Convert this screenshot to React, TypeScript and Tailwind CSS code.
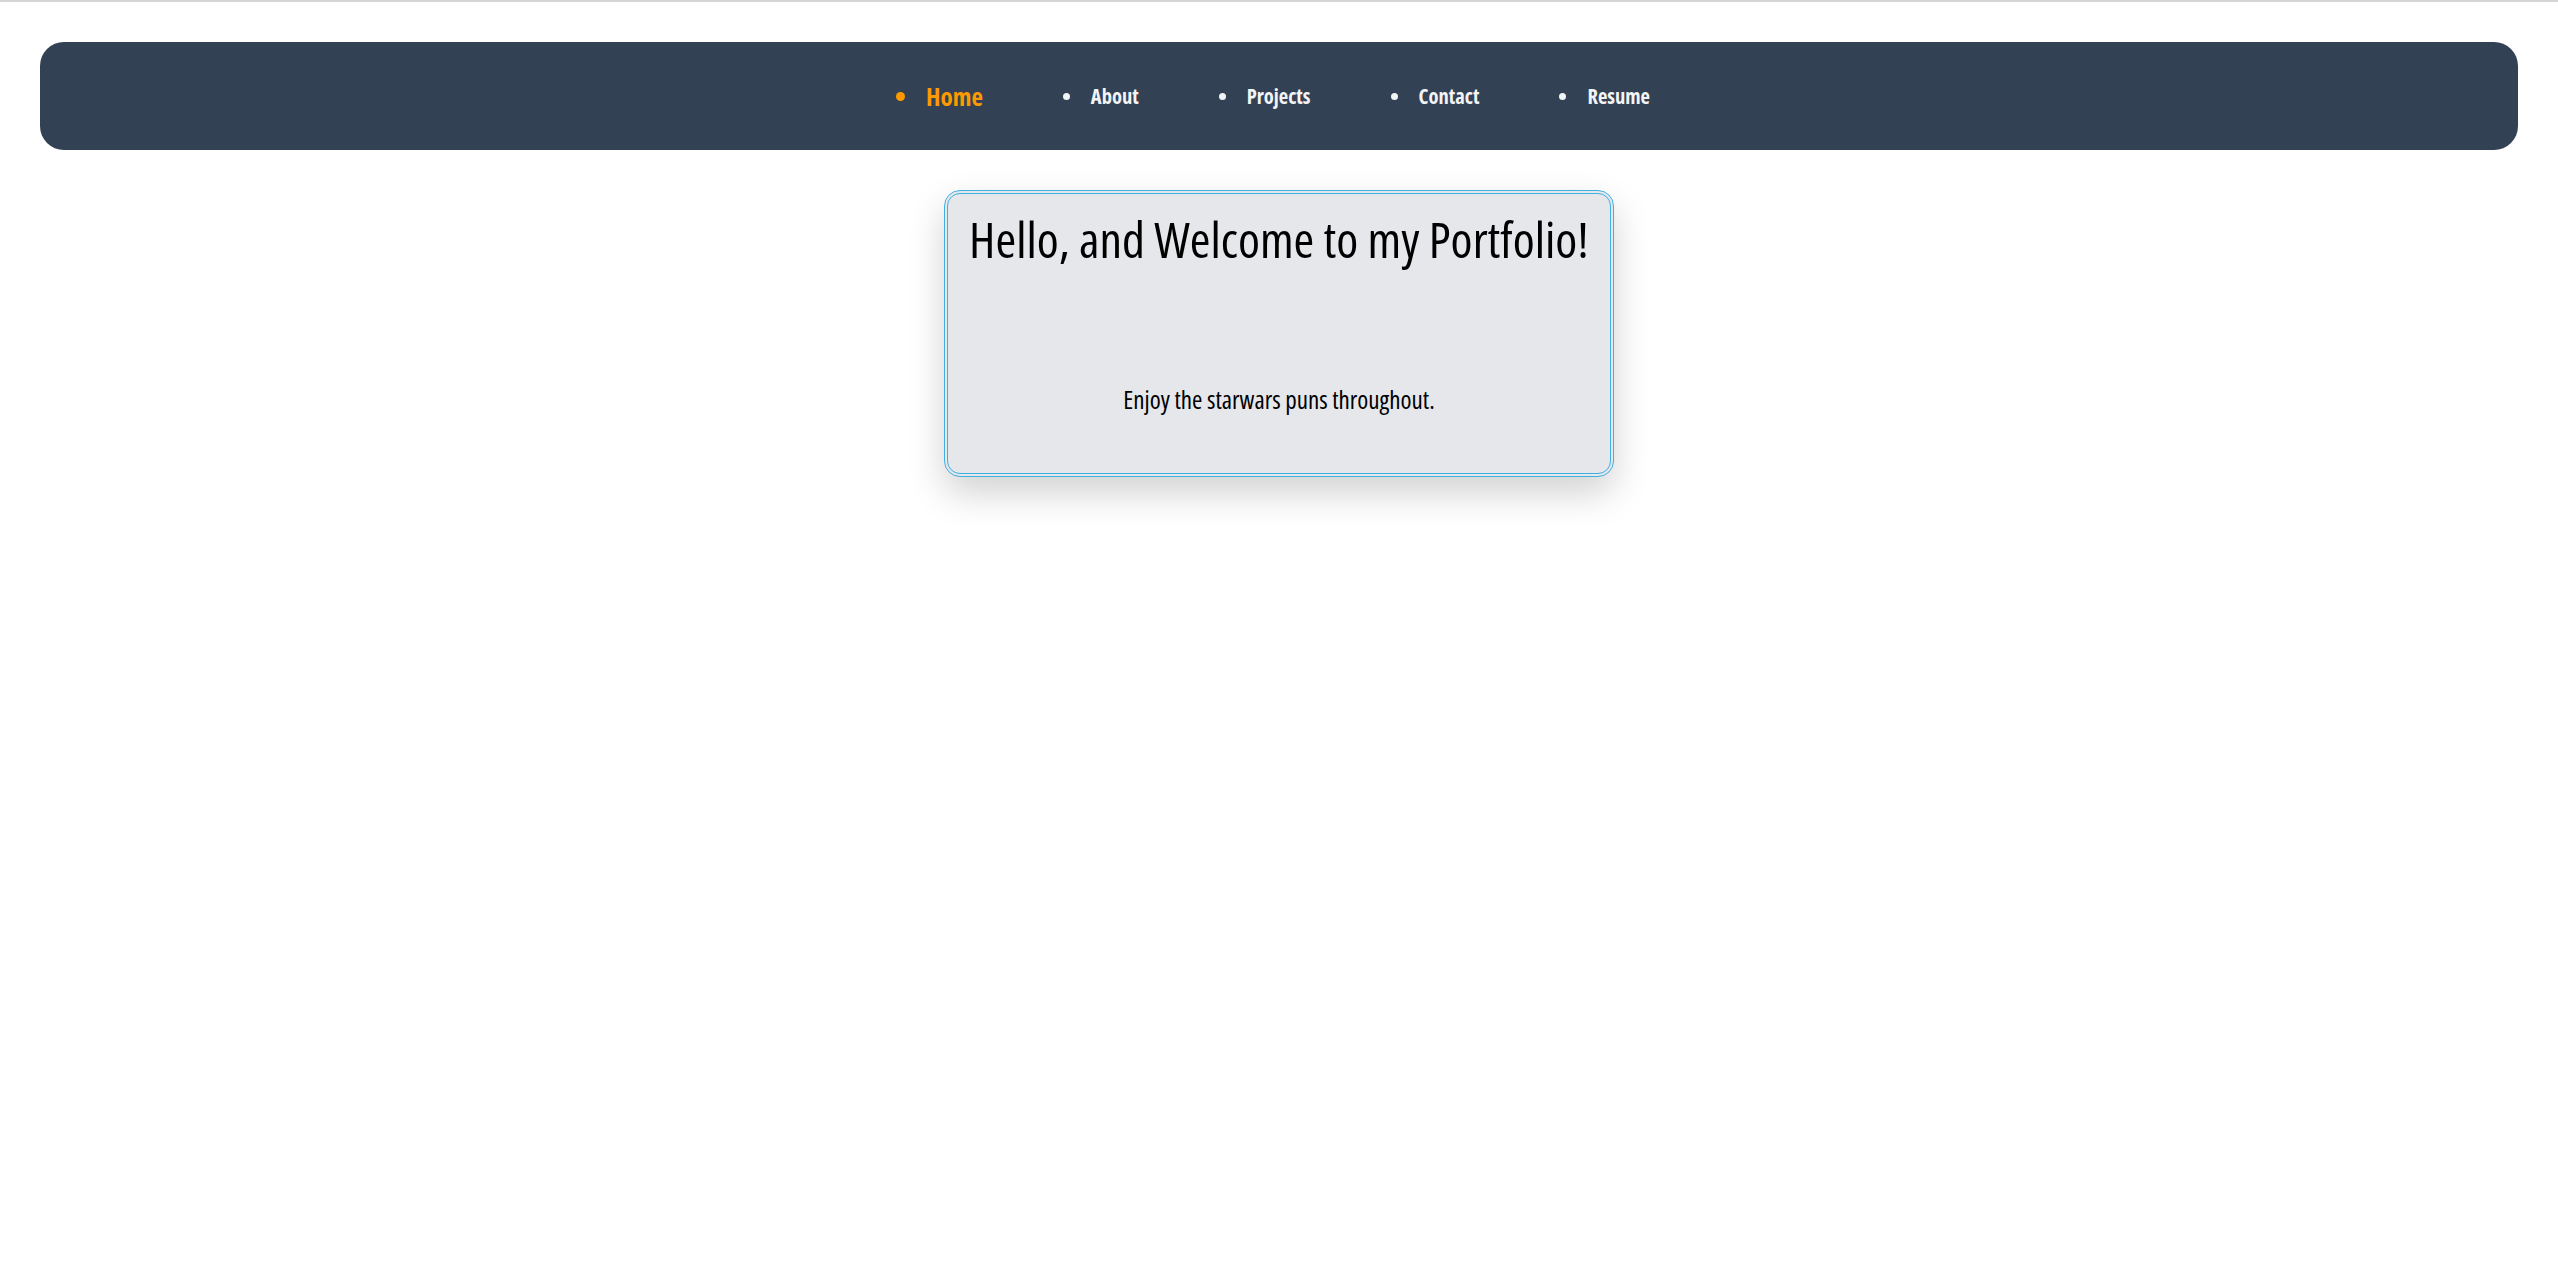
const links = [
  { label: "Home", active: true },
  { label: "About", active: false },
  { label: "Projects", active: false },
  { label: "Contact", active: false },
  { label: "Resume", active: false },
];

function NavBar() {
  return (
    <nav className="mx-10 mt-10 h-[108px] rounded-3xl bg-[#334155] flex items-center justify-center">
      <ul className="flex items-center gap-[80px] pr-3">
        {links.map((link) => (
          <li key={link.label} className="flex items-center gap-[21px]">
            <span
              className={
                link.active
                  ? "block w-[9px] h-[9px] rounded-full bg-amber-500"
                  : "block w-[7px] h-[7px] rounded-full bg-gray-100"
              }
            />
            <a
              href="#"
              className={
                link.active
                  ? "text-[25px] leading-none font-bold text-amber-500"
                  : "text-[20.5px] leading-none font-bold text-gray-100"
              }
            >
              {link.label}
            </a>
          </li>
        ))}
      </ul>
    </nav>
  );
}

export default function App() {
  return (
    <div className="min-h-screen bg-white border-t-2 border-[#d4d4d4] font-['Open_Sans',sans-serif] font-stretch-condensed">
      <NavBar />
      <main className="flex justify-center mt-10">
        <section className="w-[670px] h-[287px] rounded-2xl border-4 border-double border-[#3fb0e2] bg-[#e5e7eb] shadow-[0_16px_36px_rgba(0,0,0,0.18)] flex flex-col items-center">
          <h1 className="mt-5 text-[50px] leading-none font-medium text-black">
            Hello, and Welcome to my Portfolio!
          </h1>
          <p className="mt-[123px] text-[25px] leading-none font-medium text-black">
            Enjoy the starwars puns throughout.
          </p>
        </section>
      </main>
    </div>
  );
}
